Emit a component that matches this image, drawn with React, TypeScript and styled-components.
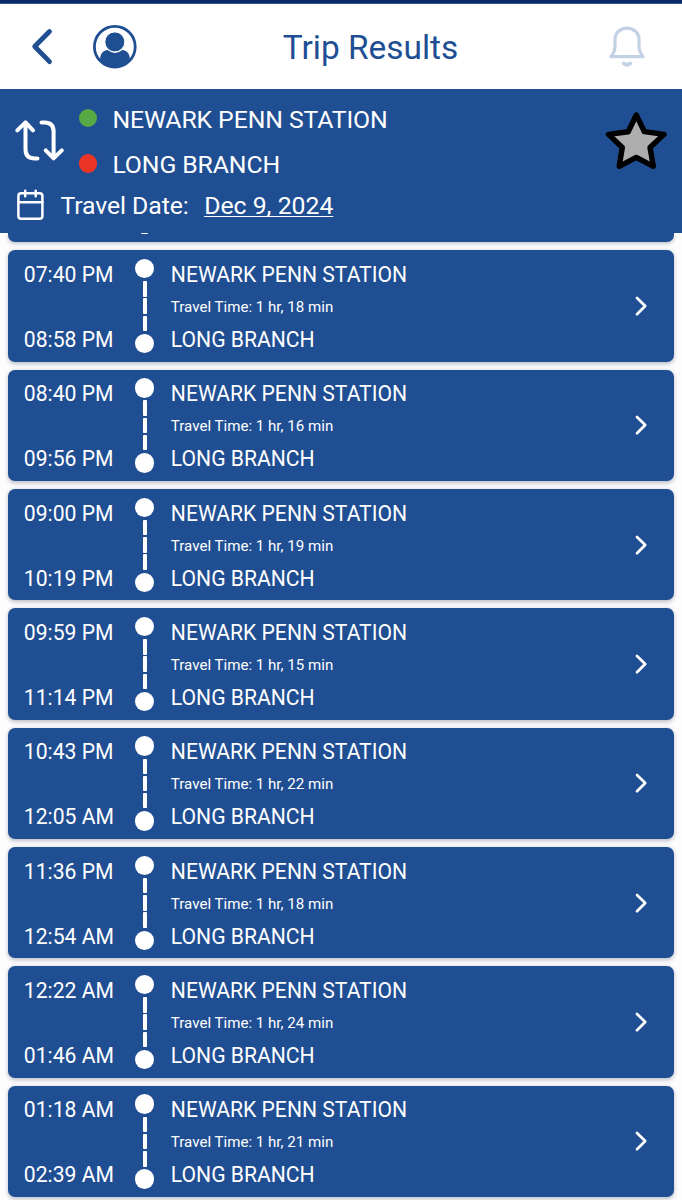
import React from "react";
import styled, { createGlobalStyle } from "styled-components";

const blue = "#204e93";

const GlobalStyle = createGlobalStyle`
  *, *::before, *::after { box-sizing: border-box; }
  html, body { margin: 0; padding: 0; background: #fff; overflow: hidden; }
  body { font-family: Roboto, "Liberation Sans", sans-serif; }
`;

const Screen = styled.div`
  width: 682px;
  height: 1200px;
  display: flex;
  flex-direction: column;
  overflow: hidden;
  background: #fdfdfe;
`;

const StatusStrip = styled.div`
  flex: none;
  height: 4px;
  background: #0a2967;
  border-bottom: 1px solid #3a5587;
`;

const TopBar = styled.header`
  flex: none;
  height: 85px;
  display: grid;
  grid-template-columns: 166px 1fr 106px;
  align-items: center;
  padding: 0 36px 0 29px;
  background: #fff;
  color: ${blue};
`;

const TopActions = styled.div`
  display: flex;
  align-items: center;
  gap: 37px;
`;

const TopEnd = styled.div`
  display: flex;
  justify-content: flex-end;
`;

const Title = styled.h1`
  margin: 0;
  padding: 3px 0 0 6px;
  text-align: center;
  font-size: 33.4px;
  line-height: 40px;
  font-weight: 400;
  white-space: nowrap;
`;

const Summary = styled.section`
  flex: none;
  height: 144px;
  padding: 14px 15px 0 14px;
  background: ${blue};
  color: #fff;
  font-size: 24.8px;
  letter-spacing: -0.1px;
  line-height: 32px;
  white-space: nowrap;
`;

const Route = styled.div`
  display: flex;
  height: 78px;
`;

const SwapSlot = styled.div`
  width: 65px;
  padding-top: 15px;
`;

const Stops = styled.div`
  flex: 1;
  display: flex;
  flex-direction: column;
  gap: 13.4px;
  padding-top: 1px;
`;

const Stop = styled.div`
  display: flex;
  align-items: center;
  gap: 15px;
  height: 32px;
`;

const StopDot = styled.span<{ $color: string }>`
  width: 18.4px;
  height: 18.4px;
  margin-top: -3.5px;
  border-radius: 50%;
  background: ${(p) => p.$color};
`;

const StarSlot = styled.div`
  padding: 7px 0 0;
`;

const DateRow = styled.div`
  display: flex;
  align-items: center;
  height: 48px;
  padding-left: 3px;
`;

const DateLabel = styled.span`
  margin: 2px 0 0 16.5px;
`;

const DateValue = styled.span`
  margin: 2px 0 0 15.5px;
  letter-spacing: 0;
  text-decoration: underline;
  text-decoration-thickness: 1.3px;
  text-underline-offset: 2px;
  text-decoration-skip-ink: none;
`;

const TripList = styled.main`
  flex: 1;
  min-height: 0;
  overflow: hidden;
  padding: 0 7.8px;
  display: flex;
  flex-direction: column;
  gap: 7.96px;
`;

const Card = styled.article`
  flex: none;
  height: 111.4px;
  display: grid;
  grid-template-columns: 118px 29px 1fr 40px;
  padding: 0 13px 0 16px;
  border-radius: 7px;
  background: ${blue};
  color: #fff;
  box-shadow: 0 1.5px 4px rgba(30, 40, 70, 0.3);
  font-size: 21.15px;
  line-height: 24px;
  white-space: nowrap;
`;

const CardTail = styled(Card)`
  height: 9.3px;
  border-radius: 0 0 7px 7px;
`;

const TrackDotTail = styled.span`
  justify-self: start;
  width: 7px;
  height: 1px;
  margin-left: -0.7px;
  border-radius: 0 0 4px 4px;
  background: #fff;
  grid-column: 2;
`;

const Times = styled.div`
  display: flex;
  flex-direction: column;
  justify-content: space-between;
  height: 101.6px;
  padding-top: 12.6px;
`;

const Stations = styled(Times)`
  align-items: flex-start;
`;

const Duration = styled.span`
  margin-top: -0.8px;
  font-size: 15.1px;
`;

const Track = styled.div`
  display: flex;
  flex-direction: column;
  align-items: center;
  width: 19.4px;
  margin-left: -6.9px;
  padding-top: 8.7px;
`;

const TrackDot = styled.span`
  flex: none;
  width: 19.4px;
  height: 19.4px;
  border-radius: 50%;
  background: #fff;
`;

const TrackLine = styled.div`
  display: flex;
  flex-direction: column;
  gap: 1.6px;
  height: 55.6px;
  padding: 2.8px 0;
`;

const Dash = styled.span`
  width: 4px;
  height: 15.6px;
  border-radius: 0.8px;
  background: #fff;
`;

const CardEnd = styled.div`
  display: flex;
  align-items: center;
  justify-content: center;
`;

const BackIcon = () => (
  <svg width="26" height="40" viewBox="0 0 26 40" fill="none">
    <path d="M20.5 4.5 5.7 19.5 20.5 34.7" stroke={blue} strokeWidth="4.8" strokeLinecap="round" strokeLinejoin="round" />
  </svg>
);

const ProfileIcon = () => (
  <svg width="46" height="46" viewBox="0 0 46 46">
    <circle cx="22.8" cy="22.7" r="20.4" fill="none" stroke={blue} strokeWidth="2.8" />
    <path d="M8.2 34.2C8.5 29.3 11.3 26.4 15.8 26Q23 32.2 30.2 26C34.7 26.4 37.5 29.3 37.8 34.2L38.3 36Q32.5 43.4 23 43.4T7.5 36Z" fill={blue} />
    <circle cx="22.8" cy="17.9" r="10" fill={blue} stroke="#fff" strokeWidth="1" />
  </svg>
);

const BellIcon = () => (
  <svg width="38" height="44" viewBox="0 0 38 44" fill="none" stroke="#c3d1e4" strokeWidth="3.2" strokeLinejoin="round" strokeLinecap="round">
    <path d="M3 31.7Q6.6 27.2 7 22V14.9C7 7.5 12.3 3.2 19 3.2S31 7.5 31 14.9V22Q31.4 27.2 35 31.7Z" />
    <path d="M15.8 38.4Q19 41.2 22.2 38.4" strokeWidth="3.8" />
  </svg>
);

const SwapIcon = () => (
  <svg width="52" height="44" viewBox="0 0 52 44" fill="none" stroke="#fff" strokeWidth="4" strokeLinecap="round" strokeLinejoin="round">
    <path d="M3.3 12.4 11.5 4.4 19 12.4M11.5 5.4V31.2Q11.5 40.5 21 40.5H23.5" />
    <path d="M27.5 4.4H30.5Q39.6 4.4 39.6 13.4V39.9M31.7 32.4 39.6 40.3 47.8 32.4" />
  </svg>
);

const StarIcon = () => (
  <svg width="62" height="62" viewBox="0 0 62 62">
    <path d="M31.3 5 39.4 21.7 59 24.4 45 37.5 48.3 56.3 31.3 47.4 14.2 56.3 17.3 37.5 3.5 24.4 23.2 21.7Z" fill="#adadad" stroke="#000" strokeWidth="5.4" strokeLinejoin="round" />
  </svg>
);

const CalendarIcon = () => (
  <svg width="27" height="32" viewBox="0 0 27 32" fill="none" stroke="#fff" strokeWidth="2.5" strokeLinecap="round">
    <rect x="1.4" y="4.3" width="24" height="25.4" rx="2.8" />
    <path d="M1.5 13.2H25.4M8.2 1.7V7.3M18.7 1.7V7.3" />
  </svg>
);

const ChevronIcon = () => (
  <svg width="14" height="22" viewBox="0 0 14 22" fill="none">
    <path d="M3 3 11.2 11 3 19.2" stroke="#fff" strokeWidth="2.7" strokeLinecap="round" strokeLinejoin="round" />
  </svg>
);

const trips = [
  ["07:40 PM", "08:58 PM", 18],
  ["08:40 PM", "09:56 PM", 16],
  ["09:00 PM", "10:19 PM", 19],
  ["09:59 PM", "11:14 PM", 15],
  ["10:43 PM", "12:05 AM", 22],
  ["11:36 PM", "12:54 AM", 18],
  ["12:22 AM", "01:46 AM", 24],
  ["01:18 AM", "02:39 AM", 21],
] as const;

export default function App() {
  return (
    <>
      <GlobalStyle />
      <Screen>
        <StatusStrip />
        <TopBar>
          <TopActions>
            <BackIcon />
            <ProfileIcon />
          </TopActions>
          <Title>Trip Results</Title>
          <TopEnd>
            <BellIcon />
          </TopEnd>
        </TopBar>
        <Summary>
          <Route>
            <SwapSlot>
              <SwapIcon />
            </SwapSlot>
            <Stops>
              <Stop>
                <StopDot $color="#57a944" />
                <span>NEWARK PENN STATION</span>
              </Stop>
              <Stop>
                <StopDot $color="#ea3424" />
                <span>LONG BRANCH</span>
              </Stop>
            </Stops>
            <StarSlot>
              <StarIcon />
            </StarSlot>
          </Route>
          <DateRow>
            <CalendarIcon />
            <DateLabel>Travel Date:</DateLabel>
            <DateValue>Dec 9, 2024</DateValue>
          </DateRow>
        </Summary>
        <TripList>
          <CardTail>
            <TrackDotTail />
          </CardTail>
          {trips.map(([depart, arrive, minutes]) => (
            <Card key={depart}>
              <Times>
                <span>{depart}</span>
                <span>{arrive}</span>
              </Times>
              <Track>
                <TrackDot />
                <TrackLine>
                  <Dash />
                  <Dash />
                  <Dash />
                </TrackLine>
                <TrackDot />
              </Track>
              <Stations>
                <span>NEWARK PENN STATION</span>
                <Duration>{`Travel Time: 1 hr, ${minutes} min`}</Duration>
                <span>LONG BRANCH</span>
              </Stations>
              <CardEnd>
                <ChevronIcon />
              </CardEnd>
            </Card>
          ))}
        </TripList>
      </Screen>
    </>
  );
}
